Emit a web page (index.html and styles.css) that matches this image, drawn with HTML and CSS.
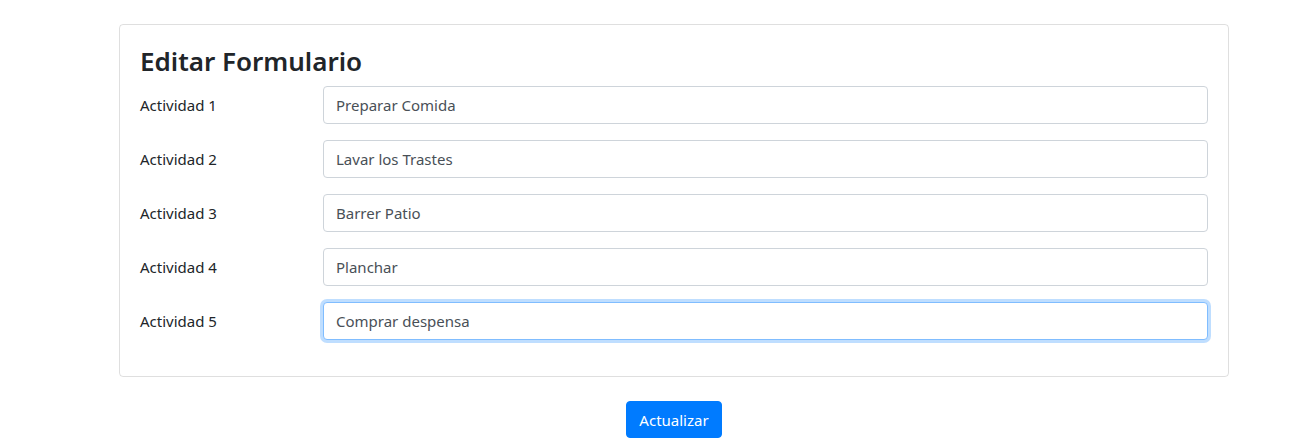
FILE: index.html
```html
<!DOCTYPE html>
<html lang="es">
<head>
<meta charset="utf-8">
<title>Editar Formulario</title>
<link rel="stylesheet" href="styles.css">
</head>
<body>
<main class="page">
  <form class="form">
    <section class="card">
      <h3 class="card-title">Editar Formulario</h3>
      <div class="row">
        <label class="label" for="a1">Actividad 1</label>
        <input class="input" id="a1" type="text" value="Preparar Comida">
      </div>
      <div class="row">
        <label class="label" for="a2">Actividad 2</label>
        <input class="input" id="a2" type="text" value="Lavar los Trastes">
      </div>
      <div class="row">
        <label class="label" for="a3">Actividad 3</label>
        <input class="input" id="a3" type="text" value="Barrer Patio">
      </div>
      <div class="row">
        <label class="label" for="a4">Actividad 4</label>
        <input class="input" id="a4" type="text" value="Planchar">
      </div>
      <div class="row">
        <label class="label" for="a5">Actividad 5</label>
        <input class="input input-focus" id="a5" type="text" value="Comprar despensa">
      </div>
    </section>
    <div class="actions">
      <button class="btn" type="button">Actualizar</button>
    </div>
  </form>
</main>
<script src="script.js"></script>
</body>
</html>
```
FILE: styles.css
```css
* { box-sizing: border-box; }
html, body { margin: 0; padding: 0; background: #fff; }
body {
  font-family: "Noto Sans", "Open Sans", sans-serif;
  font-size: 15px;
  line-height: 1.5;
  color: #212529;
}
.page {
  padding: 24px 0 0 119px;
}
.form {
  width: 1110px;
}
.card {
  border: 1px solid rgba(0,0,0,.125);
  border-radius: 4px;
  padding: 19px 20px 20px 20px;
}
.card-title {
  margin: 0 0 8px 0;
  font-size: 26px;
  font-weight: 600;
  line-height: 34px;
  color: #212529;
}
.row {
  display: grid;
  grid-template-columns: 183px 1fr;
  align-items: start;
  margin-bottom: 16px;
}
.label {
  padding-top: 7px;
  line-height: 24px;
  font-size: 15px;
}
.input {
  height: 38px;
  width: 100%;
  padding: 6px 12px;
  font-family: inherit;
  font-size: 15px;
  color: #495057;
  background: #fff;
  border: 1px solid #ced4da;
  border-radius: 4px;
  outline: none;
}
.input-focus, .input:focus {
  border-color: #80bdff;
  box-shadow: 0 0 0 3px rgba(0,123,255,.25);
}
.actions {
  display: flex;
  justify-content: center;
  padding-top: 24px;
}
.btn {
  height: 37px;
  padding: 0 12px;
  font-family: inherit;
  font-size: 15px;
  color: #fff;
  background: #007bff;
  border: 1px solid #007bff;
  border-radius: 4px;
}
```
FILE: script.js
```js
var el = document.getElementById('a5');
el.focus();
el.setSelectionRange(el.value.length, el.value.length);
```
